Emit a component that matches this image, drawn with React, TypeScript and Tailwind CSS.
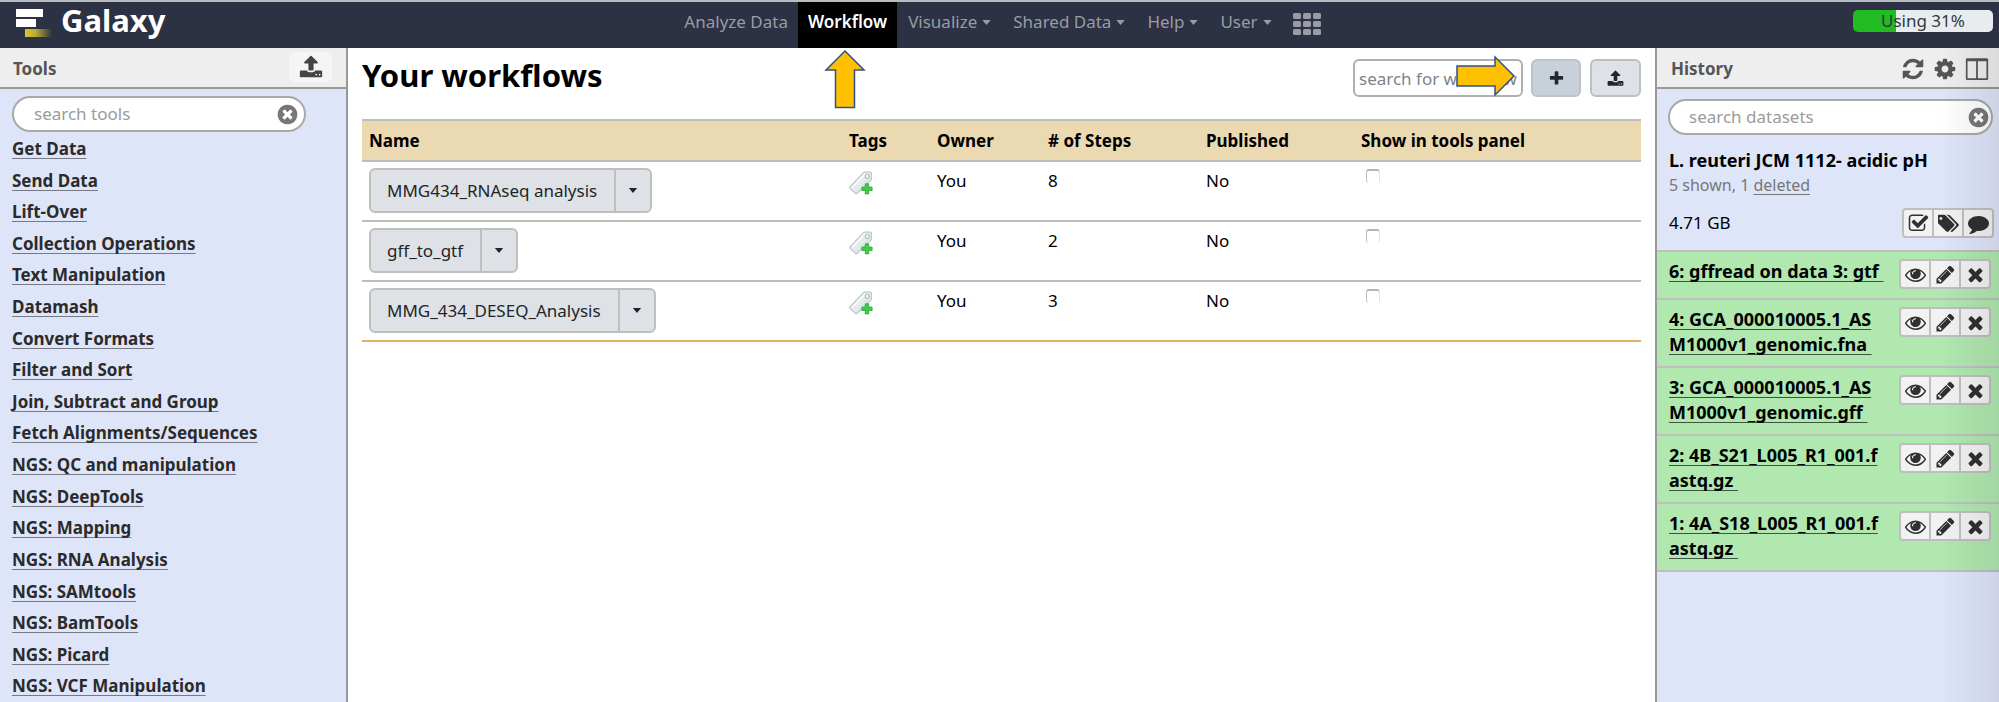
import React from "react";

const ICONS = {
  timesCircle:
    "M1277 1122q0-26-19-45l-181-181 181-181q19-19 19-45 0-27-19-46l-90-90q-19-19-46-19-26 0-45 19l-181 181-181-181q-19-19-45-19-27 0-46 19l-90 90q-19 19-19 46 0 26 19 45l181 181-181 181q-19 19-19 45 0 27 19 46l90 90q19 19 46 19 26 0 45-19l181-181 181 181q19 19 45 19 27 0 46-19l90-90q19-19 19-46zm387-226q0 209-103 385.5t-279.5 279.5-385.5 103-385.5-103-279.5-279.5-103-385.5 103-385.5 279.5-279.5 385.5-103 385.5 103 279.5 279.5 103 385.5z",
  times:
    "M1490 1322q0 40-28 68l-136 136q-28 28-68 28t-68-28l-294-294-294 294q-28 28-68 28t-68-28l-136-136q-28-28-28-68t28-68l294-294-294-294q-28-28-28-68t28-68l136-136q28-28 68-28t68 28l294 294 294-294q28-28 68-28t68 28l136 136q28 28 28 68t-28 68l-294 294 294 294q28 28 28 68z",
  plus: "M1600 736v192q0 40-28 68t-68 28h-416v416q0 40-28 68t-68 28h-192q-40 0-68-28t-28-68v-416h-416q-40 0-68-28t-28-68v-192q0-40 28-68t68-28h416v-416q0-40 28-68t68-28h192q40 0 68 28t28 68v416h416q40 0 68 28t28 68z",
  upload:
    "M1344 1472q0-26-19-45t-45-19-45 19-19 45 19 45 45 19 45-19 19-45zm256 0q0-26-19-45t-45-19-45 19-19 45 19 45 45 19 45-19 19-45zm128-224v320q0 40-28 68t-68 28h-1472q-40 0-68-28t-28-68v-320q0-40 28-68t68-28h427q21 56 70.5 92t110.5 36h256q61 0 110.5-36t70.5-92h427q40 0 68 28t28 68zm-325-648q-17 40-59 40h-256v448q0 26-19 45t-45 19h-256q-26 0-45-19t-19-45v-448h-256q-42 0-59-40-17-39 14-69l448-448q18-19 45-19t45 19l448 448q31 30 14 69z",
  refresh:
    "M1639 1056q0 5-1 7-64 268-268 434.5t-478 166.5q-146 0-282.5-55t-243.5-157l-129 129q-19 19-45 19t-45-19-19-45v-448q0-26 19-45t45-19h448q26 0 45 19t19 45-19 45l-137 137q71 66 161 102t187 36q134 0 250-65t186-179q11-17 53-117 8-23 30-23h192q13 0 22.5 9.5t9.5 22.5zm25-800v448q0 26-19 45t-45 19h-448q-26 0-45-19t-19-45 19-45l138-138q-148-137-349-137-134 0-250 65t-186 179q-11 17-53 117-8 23-30 23h-199q-13 0-22.5-9.5t-9.5-22.5v-7q65-268 270-434.5t480-166.5q146 0 284 55.5t245 156.5l130-129q19-19 45-19t45 19 19 45z",
  cog: "M1152 896q0-106-75-181t-181-75-181 75-75 181 75 181 181 75 181-75 75-181zm512-109v222q0 12-8 23t-20 13l-185 28q-19 54-39 91 35 50 107 138 10 12 10 25t-9 23q-27 37-99 108t-94 71q-12 0-26-9l-138-108q-44 23-91 38-16 136-29 186-7 28-36 28h-222q-14 0-24.5-8.5t-11.5-21.5l-28-184q-49-16-90-37l-141 107q-10 9-25 9-14 0-25-11-126-114-165-168-7-10-7-23 0-12 8-23 15-21 51-66.5t54-70.5q-27-50-41-99l-183-27q-13-2-21-12.5t-8-23.5v-222q0-12 8-23t19-13l186-28q14-46 39-92-40-57-107-138-10-12-10-24 0-10 9-23 26-36 98.500-107.500t94.500-71.500q13 0 26 10l138 107q44-23 91-38 16-136 29-186 7-28 36-28h222q14 0 24.500 8.500t11.500 21.500l28 184q49 16 90 37l142-107q9-9 24-9 13 0 25 10 129 119 165 170 7 8 7 22 0 12-8 23-15 21-51 66.500t-54 70.500q26 50 41 98l183 28q13 2 21 12.500t8 23.500z",
  columns:
    "M160 90h1472q96 0 96 96v1438q0 96-96 96H160q-96 0-96-96V186q0-96 96-96zM190 320v1240q0 34 34 34h606V320zM960 320v1274h608q34 0 34-34V320z",
  checkSquare:
    "M1472 930v318q0 119-84.5 203.5t-203.5 84.5h-832q-119 0-203.5-84.5t-84.5-203.5v-832q0-119 84.5-203.5t203.5-84.5h832q63 0 117 25 15 7 18 23 3 17-9 29l-49 49q-10 10-23 10-3 0-9-2-23-6-45-6h-832q-66 0-113 47t-47 113v832q0 66 47 113t113 47h832q66 0 113-47t47-113v-254q0-13 9-22l64-64q10-10 23-10 6 0 12 3 20 8 20 29zm231-489l-814 814q-24 24-57 24t-57-24l-430-430q-24-24-24-57t24-57l110-110q24-24 57-24t57 24l263 263 647-647q24-24 57-24t57 24l110 110q24 24 24 57t-24 57z",
  tags: "M384 448q0-53-37.5-90.5t-90.5-37.5-90.5 37.5-37.5 90.5 37.5 90.5 90.5 37.5 90.5-37.5 37.5-90.5zm1067 576q0 53-37 90l-491 492q-39 37-91 37-53 0-90-37l-715-716q-38-37-64.5-101t-26.5-117v-416q0-52 38-90t90-38h416q53 0 117 26.5t102 64.5l715 714q37 39 37 91zm384 0q0 53-37 90l-491 492q-39 37-91 37-36 0-59-14t-53-45l470-470q37-37 37-90 0-52-37-91l-715-714q-38-38-102-64.5t-117-26.5h224q53 0 117 26.5t102 64.5l715 714q37 39 37 91z",
  comment:
    "M1792 896q0 174-120 321.5t-326 233-450 85.5q-70 0-145-8-198 175-460 242-49 14-114 22-17 2-30.5-9t-17.5-29v-1q-3-4-.5-12t2-10 4.5-9.5l6-9 7-8.5 8-9q7-8 31-34.5t34.5-38 31-39.5 32.5-51 27-59 26-76q-157-89-247.5-220t-90.5-281q0-130 71-248.5t191-204.5 286-136.5 348-50.5q244 0 450 85.5t326 233 120 321.5z",
  eye: "M1664 960q-152-236-381-353 61 104 61 225 0 185-131.5 316.5t-316.5 131.5-316.5-131.5-131.5-316.5q0-121 61-225-229 117-381 353 133 205 333.5 326.5t434.5 121.5 434.5-121.5 333.5-326.5zm-720-384q0-20-14-34t-34-14q-125 0-214.5 89.5t-89.5 214.5q0 20 14 34t34 14 34-14 14-34q0-86 61-147t147-61q20 0 34-14t14-34zm848 384q0 34-20 69-140 230-376.5 368.5t-499.5 138.5-499.5-139-376.5-368q-20-35-20-69t20-69q140-229 376.5-368t499.5-139 499.5 139 376.5 368q20 35 20 69z",
  pencil:
    "M491 1536l91-91-235-235-91 91v107h128v128h107zm523-928q0-22-22-22-10 0-17 7l-542 542q-7 7-7 17 0 22 22 22 10 0 17-7l542-542q7-7 7-17zm-54-192l416 416-832 832h-416v-416zm683 96q0 53-37 90l-166 166-416-416 166-165q36-38 90-38 53 0 91 38l235 234q37 39 37 91z",
};

type IconName = keyof typeof ICONS;

function Icon({ name, className, box = 1792 }: { name: IconName; className: string; box?: number }) {
  return (
    <svg viewBox={`0 0 ${box} 1792`} fill="currentColor" fillRule={name === "columns" ? "evenodd" : "nonzero"} className={`shrink-0 ${className}`} aria-hidden="true">
      <path d={ICONS[name]} />
    </svg>
  );
}

function Caret({ className }: { className: string }) {
  return (
    <svg viewBox="0 0 10 6" fill="currentColor" className={className} aria-hidden="true">
      <path d="M0 0h10L5 6z" />
    </svg>
  );
}

function TagAdd() {
  return (
    <svg viewBox="0 0 24 24" className="h-6 w-6" aria-hidden="true">
      <defs>
        <linearGradient id="tag" x1="0" y1="0" x2="1" y2="1">
          <stop offset="0" stopColor="#f3f8f8" />
          <stop offset="1" stopColor="#d3dfe0" />
        </linearGradient>
      </defs>
      <path d="M1 16 14.500 1.700q.5-.6 1.300-.6h5.400q1.200 0 1.200 1.200v5.700q0 .8-.6 1.400L8 22.500q-.8.7-1.500 0L1 17.400q-.7-.7 0-1.400z" fill="url(#tag)" stroke="#bccaca" strokeWidth="1.200" />
      <path d="M3 16.600 15.500 3.200" stroke="#fff" strokeWidth="1.200" />
      <circle cx="18.300" cy="5.400" r="1.900" fill="#fff" stroke="#b0bdbe" strokeWidth="1.200" />
      <path d="M16.300 12.800h3.400v3.300h3.400v3.400h-3.400v3.400h-3.400v-3.400h-3.400v-3.400h3.400z" fill="#43cb48" stroke="#2fae3c" strokeWidth=".9" strokeLinejoin="round" />
    </svg>
  );
}

const TOOLS = [
  "Get Data",
  "Send Data",
  "Lift-Over",
  "Collection Operations",
  "Text Manipulation",
  "Datamash",
  "Convert Formats",
  "Filter and Sort",
  "Join, Subtract and Group",
  "Fetch Alignments/Sequences",
  "NGS: QC and manipulation",
  "NGS: DeepTools",
  "NGS: Mapping",
  "NGS: RNA Analysis",
  "NGS: SAMtools",
  "NGS: BamTools",
  "NGS: Picard",
  "NGS: VCF Manipulation",
];

const WORKFLOWS = [
  { name: "MMG434_RNAseq analysis", steps: 8 },
  { name: "gff_to_gtf", steps: 2 },
  { name: "MMG_434_DESEQ_Analysis", steps: 3 },
];

const DATASETS = [
  "6: gffread on data 3: gtf",
  "4: GCA_000010005.1_ASM1000v1_genomic.fna",
  "3: GCA_000010005.1_ASM1000v1_genomic.gff",
  "2: 4B_S21_L005_R1_001.fastq.gz",
  "1: 4A_S18_L005_R1_001.fastq.gz",
];

const MENUS = ["Visualize", "Shared Data", "Help", "User"];

function Masthead() {
  return (
    <header className="grid h-[48px] shrink-0 grid-cols-[1fr_auto_1fr] border-t-2 border-[#b9bcc0] bg-[#2c3143]">
      <a href="#" className="flex items-start gap-[9px] pl-[16px] text-[31px] leading-[36px] font-bold text-white">
        <svg viewBox="0 0 36 30" className="mt-[6px] h-[30px] w-[36px]" aria-hidden="true">
          <defs>
            <linearGradient id="logo">
              <stop offset="0" stopColor="#d9c72c" />
              <stop offset=".4" stopColor="#b9aa33" />
              <stop offset="1" stopColor="#2c3143" />
            </linearGradient>
          </defs>
          <path d="M0 1h27v8H0zM0 11h20v8H0z" fill="#fff" />
          <path d="M9 21h27v8H9z" fill="url(#logo)" />
        </svg>
        Galaxy
      </a>
      <nav className="flex items-stretch text-[17px] leading-[40px] text-[#999ca5]">
        <a href="#" className="px-[10px]">Analyze Data</a>
        <a href="#" className="bg-black px-[10px] font-semibold text-white">Workflow</a>
        {MENUS.map((m) => (
          <button key={m} type="button" className="flex h-[40px] items-center gap-[5px] px-[11px]">
            {m}
            <Caret className="h-[5px] w-[9px]" />
          </button>
        ))}
        <button type="button" aria-label="Apps" className="flex h-[43px] items-center pr-[4px] pl-[10px]">
          <svg viewBox="0 0 28 22" className="h-[22px] w-[28px]" fill="currentColor" aria-hidden="true">
            {[0, 10, 20].map((x) => [0, 8, 16].map((y) => <rect key={`${x}-${y}`} x={x} y={y} width="8" height="6" rx="1.500" />))}
          </svg>
        </button>
      </nav>
      <div className="flex items-start justify-end pt-[8px] pr-[6px]">
        <div className="h-[22px] w-[140px] rounded-[5px] bg-[linear-gradient(90deg,#22bb22_31%,#e9ecef_31%)] text-center text-[17px] leading-[22px] text-[#33383d]">Using 31%</div>
      </div>
    </header>
  );
}

function SearchPill({ label, className }: { label: string; className: string }) {
  return (
    <div className={`flex h-[36px] shrink-0 items-center rounded-full border-2 border-[#a9a9a9] bg-white ${className}`}>
      <input type="text" aria-label={label} placeholder={label} className="h-[32px] min-w-0 flex-1 bg-transparent text-[17px] leading-[32px] text-[#333] outline-none placeholder:text-[#9b9b9b]" />
      <button type="button" aria-label={`Clear ${label}`} className="text-[#777]">
        <Icon name="timesCircle" className="h-[23px] w-[23px]" />
      </button>
    </div>
  );
}

function ToolsPanel() {
  return (
    <aside className="flex w-[348px] shrink-0 flex-col border-r-2 border-[#999] bg-[#dfe5f9]">
      <div className="flex h-[41px] shrink-0 items-center justify-between border-b-2 border-[#999] bg-[#eee] pt-[2px] pr-[14px] pl-[13px] text-[17px] font-bold text-[#555]">
        <h2>Tools</h2>
        <button type="button" aria-label="Upload data" className="mb-[4px] flex h-[30px] w-[43px] items-center justify-center rounded-[6px] bg-[#f5f5f5] text-[#444]">
          <Icon name="upload" className="h-[24px] w-[24px]" />
        </button>
      </div>
      <SearchPill label="search tools" className="mt-[7px] mr-[40px] mb-[1px] ml-[12px] pr-[5px] pl-[20px]" />
      <ul className="flex min-h-0 flex-1 flex-col justify-between pl-[12px] text-[17px] leading-[32px] font-bold">
        {TOOLS.map((t) => (
          <li key={t} className="min-h-0">
            <a href="#" className="text-[#2b2b2b] underline decoration-[#777a85] decoration-1 underline-offset-3 [text-decoration-skip-ink:none]">{t}</a>
          </li>
        ))}
      </ul>
    </aside>
  );
}

function WorkflowsPage() {
  return (
    <main className="relative min-w-0 flex-1 bg-white pr-[14px] pl-[14px]">
      <div className="flex h-[71px] items-start justify-between">
        <h1 className="pt-[5px] text-[31px] leading-[44px] font-bold text-black">Your workflows</h1>
        <div className="flex items-center pt-[11px]">
          <div className="relative mr-[8px]">
            <input type="text" aria-label="search for workflow" placeholder="search for workflow" className="block h-[38px] w-[170px] rounded-[6px] border-2 border-[#b0b0b0] px-[4px] text-[17px] leading-[34px] placeholder:text-[#7d838a]" />
            <svg viewBox="0 0 60 42" className="absolute -top-[4px] left-[103px] h-[42px] w-[60px]" aria-hidden="true">
              <path d="M1 11h38V2l19 19-19 19V31H1z" fill="#ffc000" stroke="#2f528f" strokeWidth="1.500" />
            </svg>
          </div>
          <button type="button" aria-label="Create workflow" className="mr-[9px] flex h-[38px] w-[50px] items-center justify-center rounded-[6px] border-2 border-[#bdc3c9] bg-[#c8d0d9] text-[#23272b]">
            <Icon name="plus" className="h-[17px] w-[17px]" />
          </button>
          <button type="button" aria-label="Import workflow" className="flex h-[38px] w-[51px] items-center justify-center rounded-[6px] border-2 border-[#bfbfbf] bg-[#dee2e6] text-[#23272b]">
            <Icon name="upload" className="h-[17px] w-[17px]" />
          </button>
        </div>
      </div>
      <svg viewBox="0 0 42 60" className="absolute top-[1px] left-[476px] h-[60px] w-[42px]" aria-hidden="true">
        <path d="M21 2 40 21H30.500V58.500H11.500V21H2z" fill="#ffc000" stroke="#2f528f" strokeWidth="1.500" />
      </svg>
      <table className="w-full table-fixed border-b-2 border-[#deb464] text-left text-[17px] text-black">
        <thead>
          <tr className="h-[41px] border-y-2 border-[#bdbdbd] bg-[#ebd9b2]">
            <th className="pl-[7px]">Name</th>
            <th className="w-[88px] pl-[7px]">Tags</th>
            <th className="w-[111px] pl-[7px]">Owner</th>
            <th className="w-[158px] pl-[7px]"># of Steps</th>
            <th className="w-[155px] pl-[7px]">Published</th>
            <th className="w-[287px] pl-[7px]">Show in tools panel</th>
          </tr>
        </thead>
        <tbody>
          {WORKFLOWS.map((w) => (
            <tr key={w.name} className="h-[60px] border-t-2 border-[#bdbdbd] align-top leading-[24px]">
              <td className="pt-[6px] pl-[7px]">
                <div className="inline-flex h-[45px] rounded-[6px] border-2 border-[#bfbfbf] bg-[#dee2e6] text-[#212529]">
                  <button type="button" className="pr-[17px] pl-[16px]">{w.name}</button>
                  <button type="button" aria-label={`${w.name} menu`} className="flex w-[36px] items-center justify-center border-l-2 border-[#bfbfbf]">
                    <Caret className="h-[5px] w-[10px]" />
                  </button>
                </div>
              </td>
              <td className="pt-[9px] pl-[7px]">
                <button type="button" aria-label="Add tag" className="block"><TagAdd /></button>
              </td>
              <td className="pt-[7px] pl-[7px]">You</td>
              <td className="pt-[7px] pl-[7px]">{w.steps}</td>
              <td className="pt-[7px] pl-[7px]">No</td>
              <td className="pt-[7px] pl-[12px]">
                <input type="checkbox" aria-label={`Show ${w.name} in tools panel`} className="block h-[14px] w-[14px] appearance-none rounded-[3px] border-t-2 border-r border-l border-t-[#b5b5b5] border-r-[#e2e2e2] border-l-[#bdbdbd]" />
              </td>
            </tr>
          ))}
        </tbody>
      </table>
    </main>
  );
}

function ButtonGroup({ items }: { items: { icon: IconName; label: string; box?: number }[] }) {
  return (
    <div className="flex h-[30px] shrink-0 divide-x-2 divide-[#bfbfbf] rounded-[4px] border-2 border-[#bfbfbf] bg-[#f2f2f2] text-[#303030]">
      {items.map((i) => (
        <button key={i.icon} type="button" aria-label={i.label} className="flex w-[30px] items-center justify-center last:w-[28px]">
          <Icon name={i.icon} box={i.box} className="h-[21px] w-[21px]" />
        </button>
      ))}
    </div>
  );
}

function HistoryPanel() {
  return (
    <aside className="relative flex w-[344px] shrink-0 flex-col border-l-2 border-[#999] bg-[#dfe5f9]">
      <div className="flex h-[41px] shrink-0 items-center border-b-2 border-[#999] bg-[#eee] pt-[2px] pr-[10px] pl-[14px] text-[#555]">
        <h2 className="flex-1 text-[17px] font-bold">History</h2>
        <div className="flex items-center gap-[8px]">
          <button type="button" aria-label="Refresh history"><Icon name="refresh" className="block h-[24px] w-[24px]" /></button>
          <button type="button" aria-label="History options"><Icon name="cog" className="block h-[24px] w-[24px]" /></button>
          <button type="button" aria-label="View all histories"><Icon name="columns" className="block h-[24px] w-[24px]" /></button>
        </div>
      </div>
      <SearchPill label="search datasets" className="mt-[10px] mr-[6px] ml-[11px] pr-[1px] pl-[19px]" />
      <div className="h-[115px] shrink-0 pt-[12px] pr-[5px] pl-[12px]">
        <h3 className="text-[18px] leading-[26px] font-bold text-black">L. reuteri JCM 1112- acidic pH</h3>
        <p className="text-[16px] leading-[24px] text-[#777]">
          5 shown, 1 <a href="#" className="underline decoration-1 underline-offset-3">deleted</a>
        </p>
        <div className="mt-[11px] flex items-center justify-between text-[17px] text-black">
          <span>4.71 GB</span>
          <ButtonGroup
            items={[
              { icon: "checkSquare", label: "Select datasets" },
              { icon: "tags", label: "Edit tags", box: 1850 },
              { icon: "comment", label: "Edit annotation" },
            ]}
          />
        </div>
      </div>
      <ul>
        {DATASETS.map((d) => (
          <li key={d} className="flex items-start justify-between border-t-2 border-[#bfbfbf] bg-[#b0e8b0] pt-[7px] pr-[8px] pb-[9px] pl-[12px] last:border-b-2">
            <a href="#" className="w-[218px] text-[18px] leading-[25px] font-bold break-all whitespace-pre-wrap text-black underline decoration-[#3f5540] decoration-1 underline-offset-3 [text-decoration-skip-ink:none]">{d + " "}</a>
            <ButtonGroup
              items={[
                { icon: "eye", label: "View data" },
                { icon: "pencil", label: "Edit attributes" },
                { icon: "times", label: "Delete" },
              ]}
            />
          </li>
        ))}
      </ul>
      <div className="pointer-events-none absolute inset-y-0 right-0 w-[60px] bg-linear-to-r from-black/0 to-black/8" />
    </aside>
  );
}

export default function App() {
  return (
    <div className="flex h-screen flex-col overflow-hidden font-['Noto_Sans','Open_Sans',sans-serif]">
      <Masthead />
      <div className="flex min-h-0 flex-1">
        <ToolsPanel />
        <WorkflowsPage />
        <HistoryPanel />
      </div>
    </div>
  );
}
